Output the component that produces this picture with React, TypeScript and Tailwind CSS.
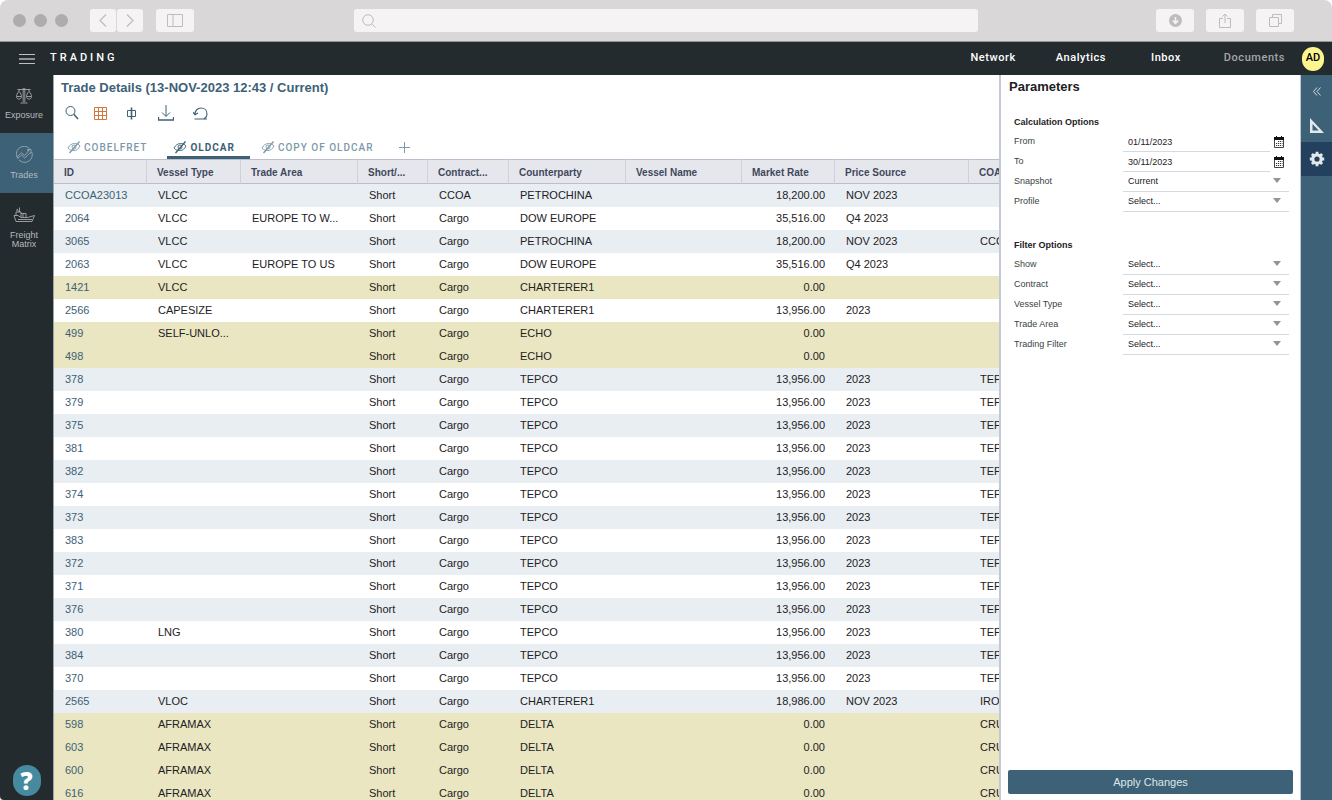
import React, { useState } from 'react';
import clsx from 'clsx';

type Row = {
  id: string;
  vessel?: string;
  area?: string;
  contract?: string;
  party: string;
  rate: string;
  source?: string;
  coa?: string;
  flagged?: boolean;
};

const tepco = (id: string, vessel?: string): Row => ({
  id,
  vessel,
  party: 'TEPCO',
  rate: '13,956.00',
  source: '2023',
  coa: 'TEP',
});

const delta = (id: string): Row => ({
  id,
  vessel: 'AFRAMAX',
  party: 'DELTA',
  rate: '0.00',
  coa: 'CRU',
  flagged: true,
});

const rows: Row[] = [
  { id: 'CCOA23013', vessel: 'VLCC', contract: 'CCOA', party: 'PETROCHINA', rate: '18,200.00', source: 'NOV 2023' },
  { id: '2064', vessel: 'VLCC', area: 'EUROPE TO W...', party: 'DOW EUROPE', rate: '35,516.00', source: 'Q4 2023' },
  { id: '3065', vessel: 'VLCC', party: 'PETROCHINA', rate: '18,200.00', source: 'NOV 2023', coa: 'CCO' },
  { id: '2063', vessel: 'VLCC', area: 'EUROPE TO US', party: 'DOW EUROPE', rate: '35,516.00', source: 'Q4 2023' },
  { id: '1421', vessel: 'VLCC', party: 'CHARTERER1', rate: '0.00', flagged: true },
  { id: '2566', vessel: 'CAPESIZE', party: 'CHARTERER1', rate: '13,956.00', source: '2023' },
  { id: '499', vessel: 'SELF-UNLO...', party: 'ECHO', rate: '0.00', flagged: true },
  { id: '498', party: 'ECHO', rate: '0.00', flagged: true },
  tepco('378'),
  tepco('379'),
  tepco('375'),
  tepco('381'),
  tepco('382'),
  tepco('374'),
  tepco('373'),
  tepco('383'),
  tepco('372'),
  tepco('371'),
  tepco('376'),
  tepco('380', 'LNG'),
  tepco('384'),
  tepco('370'),
  { id: '2565', vessel: 'VLOC', party: 'CHARTERER1', rate: '18,986.00', source: 'NOV 2023', coa: 'IRO' },
  delta('598'),
  delta('603'),
  delta('600'),
  delta('616'),
];

const columns = [
  { label: 'ID', width: 'w-[93px]' },
  { label: 'Vessel Type', width: 'w-[94px]' },
  { label: 'Trade Area', width: 'w-[117px]' },
  { label: 'Short/...', width: 'w-[70px]' },
  { label: 'Contract...', width: 'w-[81px]' },
  { label: 'Counterparty', width: 'w-[117px]' },
  { label: 'Vessel Name', width: 'w-[116px]' },
  { label: 'Market Rate', width: 'w-[93px]' },
  { label: 'Price Source', width: 'w-[134px]' },
  { label: 'COA', width: 'w-[90px]' },
];

const tabs = ['COBELFRET', 'OLDCAR', 'COPY OF OLDCAR'];

const HiddenEye = () => (
  <svg width="14" height="14" viewBox="0 0 14 14" fill="none" stroke="currentColor" strokeWidth=".9">
    <path d="M1 8C2.5 5 5 3.5 7.500 3.5S12 4.500 13 6C11.5 9 9.500 10.500 7 10.500S2.500 10 1 8Z" />
    <circle cx="7" cy="7" r="2" />
    <path d="M2.500 13 12.500 1.500" strokeWidth="1.3" />
  </svg>
);

const Caret = () => (
  <svg
    className="pointer-events-none absolute right-2 top-[6px]"
    width="8"
    height="5"
    viewBox="0 0 8 5"
    fill="#949494"
  >
    <path d="M0 0H8L4 5Z" />
  </svg>
);

const CalendarIcon = () => (
  <svg width="10" height="12" viewBox="0 0 10 12">
    <path d="M.5 2H9.5V11.5H.5Z" fill="#fff" stroke="#444" />
    <path d="M0 1H10V4H0Z" fill="#111" />
    <path d="M2.5 0V2M7.5 0V2" stroke="#111" />
    <path d="M4 5.500H8.500M2 7.500H8.500M2 9.500H8.500" stroke="#333" strokeDasharray="1.2 .8" />
  </svg>
);

function BrowserBar() {
  const chrome = 'flex h-[23px] items-center justify-center rounded-[3px] bg-[#f5f3f4] text-[#bdbdbd]';
  return (
    <div className="flex h-[42px] shrink-0 items-center rounded-t-lg border-b border-[#949696] bg-[#d9d7d8] pl-[13px] pr-[38px]">
      <div className="flex gap-2">
        <span className="size-[13px] rounded-full bg-[#adadad]" />
        <span className="size-[13px] rounded-full bg-[#adadad]" />
        <span className="size-[13px] rounded-full bg-[#adadad]" />
      </div>
      <div className="ml-[22px] flex gap-px">
        <button aria-label="Back" className={clsx(chrome, 'w-[26px]')}>
          <svg width="8" height="13" viewBox="0 0 8 13" fill="none" stroke="currentColor" strokeWidth="1.2">
            <path d="M7 .5 1 6.500 7 12.500" />
          </svg>
        </button>
        <button aria-label="Forward" className={clsx(chrome, 'w-[26px]')}>
          <svg width="8" height="13" viewBox="0 0 8 13" fill="none" stroke="currentColor" strokeWidth="1.2">
            <path d="M1 .5 7 6.500 1 12.500" />
          </svg>
        </button>
      </div>
      <button aria-label="Show sidebar" className={clsx(chrome, 'ml-[13px] w-[38px]')}>
        <svg width="16" height="13" viewBox="0 0 16 13" fill="none" stroke="currentColor">
          <path d="M.5.5H15.5V12.5H.5ZM6 .5V12.5" />
        </svg>
      </button>
      <label className="ml-[160px] mr-[178px] flex h-[23px] min-w-0 flex-1 items-center rounded-[3px] bg-[#f5f3f4] px-2">
        <svg width="14" height="14" viewBox="0 0 14 14" fill="none" stroke="#bdbdbd">
          <circle cx="6" cy="6" r="5.3" />
          <path d="M10 10 13.500 13.500" />
        </svg>
        <input aria-label="Address" className="min-w-0 flex-1 bg-transparent px-2 text-xs outline-none" />
      </label>
      <div className="flex gap-3">
        <button aria-label="Downloads" className={clsx(chrome, 'w-[38px]')}>
          <svg width="13" height="13" viewBox="0 0 13 13" fill="none">
            <circle cx="6.5" cy="6.5" r="6.5" fill="#bdbdbd" />
            <path d="M6.5 3V9M3.800 6.500 6.500 9.300 9.200 6.500" stroke="#f5f3f4" strokeWidth="1.6" />
          </svg>
        </button>
        <button aria-label="Share" className={clsx(chrome, 'w-[38px]')}>
          <svg width="12" height="15" viewBox="0 0 12 15" fill="none" stroke="currentColor">
            <path d="M4 5.500H.5V14.500H11.500V5.500H8M6 10V1M3.500 3.500 6 1 8.500 3.500" />
          </svg>
        </button>
        <button aria-label="Tabs" className={clsx(chrome, 'w-[38px]')}>
          <svg width="13" height="13" viewBox="0 0 13 13" fill="none" stroke="currentColor">
            <path d="M.5 3.500H9.500V12.500H.5ZM3.500 3V.5H12.500V9.500H10" />
          </svg>
        </button>
      </div>
    </div>
  );
}

function TopNav() {
  return (
    <header className="flex h-[33px] shrink-0 items-center bg-[#232b2e] pl-[19px] pr-2 font-[Roboto,sans-serif] text-[11px] font-medium text-white">
      <button aria-label="Menu">
        <svg width="16" height="10" viewBox="0 0 16 10" stroke="#fff">
          <path d="M0 .5H16M0 9.500H16" strokeOpacity=".7" />
          <path d="M0 5H16" />
        </svg>
      </button>
      <h1 className="ml-[15px] tracking-[3px]">TRADING</h1>
      <nav className="ml-auto flex items-center tracking-wider">
        <a href="#network">Network</a>
        <a href="#analytics" className="ml-10">Analytics</a>
        <a href="#inbox" className="ml-[45px]">Inbox</a>
        <a href="#documents" className="ml-[43px] text-[#a3a6a8]">Documents</a>
      </nav>
      <button
        aria-label="Account"
        className="ml-[17px] flex h-6 w-[22px] items-center justify-center rounded-full bg-[#fdf68f] text-black"
      >
        AD
      </button>
    </header>
  );
}

function SideNav() {
  const item = 'flex w-full flex-col items-center pr-[5px] text-[9px] leading-[9px]';
  return (
    <aside className="flex w-[54px] shrink-0 flex-col items-center rounded-bl border-r border-[#9ba5aa] bg-[#232b2e] text-[#b4b9bb]">
      <button className={clsx(item, 'h-[58px] pt-3')}>
        <svg width="16" height="17" viewBox="0 0 16 17" fill="none" stroke="currentColor" strokeWidth=".8">
          <path d="M1.500 2.500H14.500M7.200 1V15M8.800 1V15M4.500 16H11.500M3 2.500V4.500M13 2.500V4.500" />
          <path d="M3 4.500C1 6.500.5 8 .5 9.500C.5 13 5.500 13 5.500 9.500C5.500 8 5 6.500 3 4.500ZM13 4.500C11 6.500 10.500 8 10.500 9.500C10.500 13 15.500 13 15.500 9.500C15.500 8 15 6.500 13 4.500ZM1 9.500H5M11 9.500H15" />
        </svg>
        <span className="mt-[7px]">Exposure</span>
      </button>
      <button className={clsx(item, 'h-[60px] bg-[#3d6177] pt-[13px]')}>
        <svg width="17" height="17" viewBox="0 0 17 17" fill="none" stroke="currentColor" strokeWidth=".7">
          <path d="M1 11A7.700 7.700 0 0 1 13.500 2.500M15.800 6A7.700 7.700 0 0 1 3 14" />
          <path d="M1 11 5.500 6.800 8.500 9.500 13 4.500H11.500V3.500H15V7H14L8.700 12 5.500 9 1.800 12.500Z" />
        </svg>
        <span className="mt-[8px]">Trades</span>
      </button>
      <button className={clsx(item, 'h-[60px] pt-[14px]')}>
        <svg width="22" height="16" viewBox="0 0 22 16" fill="none" stroke="currentColor" strokeWidth=".8">
          <path d="M1 8.500H5L8 10.500H14.500L21.500 8.500 19 14.500H3Z" />
          <path d="M3 8.500V5H8V10M5 5V3M3 3.500 5 2M6.500.5V5M8 6.500H13V10.500M10 6.500V10M5 12.500H19" />
        </svg>
        <span className="mt-[8px]">Freight<br />Matrix</span>
      </button>
      <button
        aria-label="Help"
        className="mb-1 mt-auto flex h-[31px] w-7 items-center justify-center rounded-full bg-[#468aa0] font-['Open_Sans',sans-serif] text-2xl font-extrabold text-white"
      >
        ?
      </button>
    </aside>
  );
}

function Toolbar() {
  return (
    <div className="flex h-6 items-center pl-[11px] text-[#3d6177]">
      <button aria-label="Search">
        <svg width="14" height="14" viewBox="0 0 14 14" fill="none" stroke="currentColor">
          <circle cx="5.5" cy="5" r="4.5" />
          <path d="M8.800 8.300 13 13" strokeWidth="1.5" />
        </svg>
      </button>
      <button aria-label="Grid" className="ml-[15px] text-[#cf7a3c]">
        <svg width="13" height="13" viewBox="0 0 13 13" fill="none" stroke="currentColor">
          <path d="M.5.5H12.500V12.500H.5ZM.5 4.500H12.500M.5 8.500H12.500M4.500.5V12.500M8.500.5V12.500" />
        </svg>
      </button>
      <button aria-label="Fit columns" className="ml-5">
        <svg width="9" height="13" viewBox="0 0 9 13" fill="none" stroke="currentColor">
          <path d="M.5 3.500H8.500V9.500H.5Z" />
          <path d="M4.500.5V12.500" strokeWidth="1.6" />
        </svg>
      </button>
      <button aria-label="Export" className="ml-[22px]">
        <svg width="16" height="16" viewBox="0 0 16 16" fill="none" stroke="currentColor">
          <path d="M8 0V11M4 7.500 8 11.500 12 7.500" />
          <path d="M.5 12V15H15.500V12" strokeWidth="1.3" />
        </svg>
      </button>
      <button aria-label="Reset" className="ml-[19px]">
        <svg width="15" height="13" viewBox="0 0 15 13" fill="none" stroke="currentColor" strokeWidth="1.1">
          <path d="M2 7.500C2 3.500 4.500 1 8 1S14 3.500 14 7 13 10 11 11.500M1.500 12H14M0 5 2 7.800 5 6" />
        </svg>
      </button>
    </div>
  );
}

function TradeTable() {
  return (
    <div className="min-h-0 flex-1 overflow-hidden">
      <table className="w-[1005px] table-fixed border-separate border-spacing-0 text-left text-[11px]">
        <thead>
          <tr className="h-[25px]">
            {columns.map(col => (
              <th
                key={col.label}
                className={clsx(
                  'border-y border-r border-b-[#bcbfcb] border-r-[#cfd1d9] border-t-[#bcbfcb] bg-[#e6e7ed] p-0 pl-[10px] pt-0.5 text-[10px] font-bold text-[#3f475c]',
                  col.width,
                )}
              >
                {col.label}
              </th>
            ))}
          </tr>
        </thead>
        <tbody>
          {rows.map((row, i) => (
            <tr
              key={row.id}
              className={clsx(
                'h-[23px] text-[#1d2124] [&>td]:whitespace-nowrap [&>td]:p-0 [&>td]:pl-[11px]',
                row.flagged ? 'bg-[#eae6c1]' : i % 2 === 0 ? 'bg-[#e9eef2]' : 'bg-white',
              )}
            >
              <td>
                <a href={`#${row.id}`} className="text-[#3d6177]">{row.id}</a>
              </td>
              <td>{row.vessel}</td>
              <td>{row.area}</td>
              <td>Short</td>
              <td>{row.contract ?? 'Cargo'}</td>
              <td>{row.party}</td>
              <td />
              <td className="text-right">
                <span className="pr-[10px]">{row.rate}</span>
              </td>
              <td>{row.source}</td>
              <td>{row.coa}</td>
            </tr>
          ))}
        </tbody>
      </table>
    </div>
  );
}

function DateField({ label, value }: { label: string; value: string }) {
  const id = label.toLowerCase();
  return (
    <div className="flex h-5 items-center">
      <label htmlFor={id} className="w-[109px] text-[#3a3f42]">{label}</label>
      <input
        id={id}
        defaultValue={value}
        className="h-5 min-w-0 flex-1 border-b border-[#d5d9e2] bg-transparent pl-[5px] outline-none"
      />
      <button aria-label={`Pick ${id} date`} className="ml-1 mr-[5px]">
        <CalendarIcon />
      </button>
    </div>
  );
}

function SelectField({ label, value = 'Select...' }: { label: string; value?: string }) {
  const id = label.toLowerCase().replace(' ', '-');
  return (
    <div className="flex h-5 items-center">
      <label htmlFor={id} className="w-[109px] text-[#3a3f42]">{label}</label>
      <div className="relative h-5 flex-1">
        <select
          id={id}
          className="h-5 w-full appearance-none border-b border-[#d5d9e2] bg-transparent pl-[5px] outline-none"
        >
          <option>{value}</option>
        </select>
        <Caret />
      </div>
    </div>
  );
}

function ParametersPanel() {
  return (
    <section className="flex w-[302px] shrink-0 flex-col border-x border-l-2 border-[#c3c8d2] bg-white text-[9px] text-[#1d2124]">
      <h2 className="pl-2 pt-1 text-[13px] font-bold leading-4">Parameters</h2>
      <div className="mt-[21px] pl-[13px] pr-[11px]">
        <h3 className="h-4 text-[9px] font-bold leading-[13px]">Calculation Options</h3>
        <DateField label="From" value="01/11/2023" />
        <DateField label="To" value="30/11/2023" />
        <SelectField label="Snapshot" value="Current" />
        <SelectField label="Profile" />
        <h3 className="mt-[27px] h-4 text-[9px] font-bold leading-[13px]">Filter Options</h3>
        <SelectField label="Show" />
        <SelectField label="Contract" />
        <SelectField label="Vessel Type" />
        <SelectField label="Trade Area" />
        <SelectField label="Trading Filter" />
      </div>
      <button className="mx-[7px] mb-1.5 mt-auto h-6 rounded-[2px] bg-[#3d6177] text-[11px] text-[#dfe6ea]">
        Apply Changes
      </button>
    </section>
  );
}

function ToolRail() {
  return (
    <aside className="flex w-[31px] shrink-0 flex-col bg-[#3d6177] text-[#e3e8ec]">
      <button aria-label="Collapse" className="flex h-[33px] items-center justify-center">
        <svg width="8" height="9" viewBox="0 0 8 9" fill="none" stroke="currentColor" strokeWidth=".9">
          <path d="M4 .5.5 4.500 4 8.500M7.500.5 4 4.500 7.500 8.500" />
        </svg>
      </button>
      <button aria-label="Measure" className="flex h-[34px] items-center justify-center">
        <svg width="14" height="15" viewBox="0 0 14 15" fill="currentColor" fillRule="evenodd">
          <path d="M0 0 14 15H0ZM2.500 6V12.500H8.800Z" />
        </svg>
      </button>
      <button aria-label="Settings" className="flex h-[34px] items-center justify-center bg-[#24405f]">
        <svg width="16" height="16" viewBox="0 0 16 16" fill="none" stroke="currentColor">
          <circle cx="8" cy="8" r="4.2" strokeWidth="3.2" />
          <path
            d="M8 .8V4M8 12V15.200M.8 8H4M12 8H15.200M2.900 2.900 5 5M11 11 13.100 13.100M13.100 2.900 11 5M5 11 2.900 13.100"
            strokeWidth="2.8"
          />
        </svg>
      </button>
    </aside>
  );
}

export default function App() {
  const [activeTab, setActiveTab] = useState('OLDCAR');

  return (
    <div className="flex h-screen flex-col overflow-hidden bg-white font-['Liberation_Sans',Arial,sans-serif]">
      <BrowserBar />
      <TopNav />
      <div className="flex min-h-0 flex-1">
        <SideNav />
        <main className="flex min-w-0 flex-1 flex-col">
          <h2 className="h-[26px] pl-[7px] text-[13px] font-bold leading-[26px] text-[#3d6177]">
            Trade Details (13-NOV-2023 12:43 / Current)
          </h2>
          <Toolbar />
          <div className="mt-2.5 flex h-6 pl-[7px] font-[Roboto,sans-serif] text-[10px] tracking-widest">
            {tabs.map(tab => (
              <button
                key={tab}
                onClick={() => setActiveTab(tab)}
                className={clsx(
                  'flex items-center gap-[3px] border-b-[3px] pl-1.5 pt-[3px]',
                  tab === activeTab
                    ? 'mr-[5px] border-[#3d6177] pr-[15px] font-bold text-[#3d6177]'
                    : 'mr-5 border-transparent font-medium text-[#7c99aa]',
                )}
              >
                <HiddenEye />
                {tab}
              </button>
            ))}
            <button aria-label="Add tab" className="ml-1.5 text-[#7c99aa]">
              <svg width="11" height="11" viewBox="0 0 11 11" stroke="currentColor">
                <path d="M5.500 0V11M0 5.500H11" />
              </svg>
            </button>
          </div>
          <TradeTable />
        </main>
        <ParametersPanel />
        <ToolRail />
      </div>
    </div>
  );
}
